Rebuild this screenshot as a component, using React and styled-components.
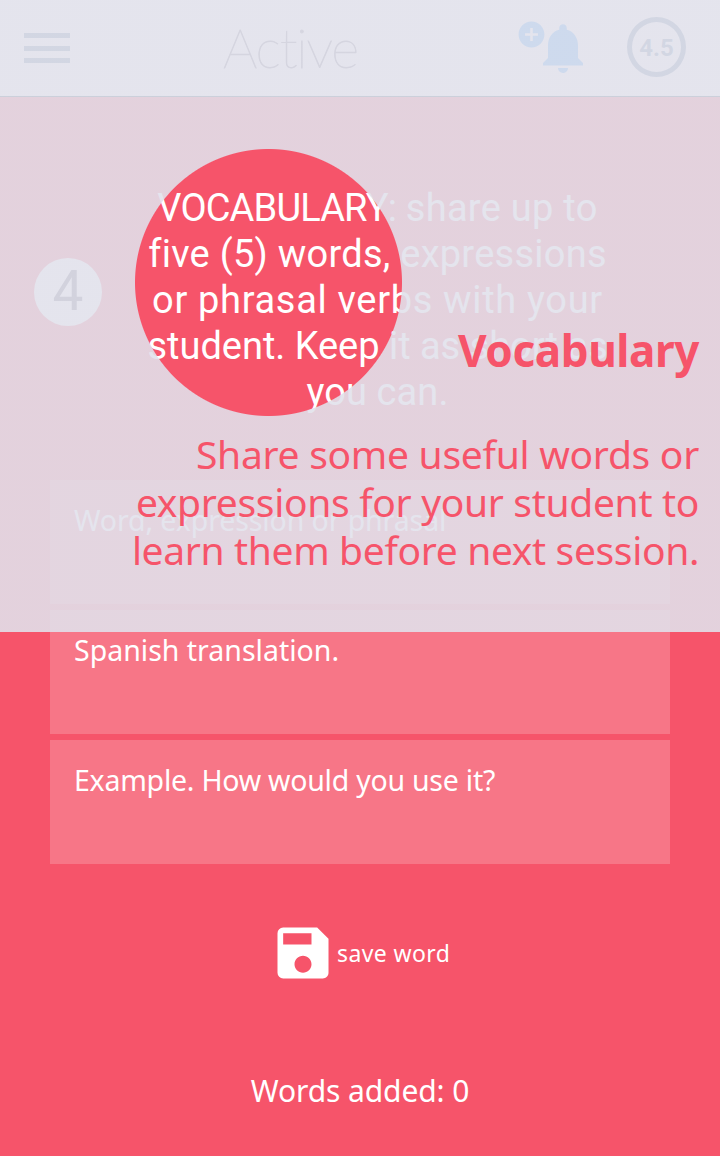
import React from 'react';
import styled, { createGlobalStyle } from 'styled-components';
import { MdSave, MdNotifications, MdAddCircle } from 'react-icons/md';

const RED = '#f6546a';

const Global = createGlobalStyle`
  * { box-sizing: border-box; }
  body { margin: 0; background: ${RED}; font-family: "Noto Sans", "Liberation Sans", sans-serif; }
`;

const Screen = styled.div`
  position: relative;
  width: 720px;
  height: 1156px;
  overflow: hidden;
  background: ${RED};
  color: #fff;
`;

const Header = styled.header`
  display: flex;
  align-items: center;
  height: 97px;
  padding: 0 34px 2px 24px;
  background: #fff;
  border-bottom: 1px solid #1c4658;
`;

const Menu = styled.div`
  display: flex;
  flex-direction: column;
  justify-content: space-between;
  width: 46px;
  height: 30px;
  margin-top: 2px;
`;

const MenuBar = styled.span`
  height: 5px;
  background: #5c7f9f;
`;

const Brand = styled.h1`
  flex: none;
  width: 136px;
  margin: 1px 0 0 153px;
  font: 100 54px/64px Lato, sans-serif;
  letter-spacing: -1.1px;
  color: #747484;
  -webkit-text-stroke: 0.8px #747484;
`;

const Notifications = styled.div`
  display: flex;
  align-items: flex-start;
  height: 60px;
  margin: 2px 0 0 auto;
  color: #32a0ff;
`;

const AddBadge = styled(MdAddCircle)`
  width: 31px;
  height: 31px;
  margin: 1px -14px 0 0;
`;

const Bell = styled(MdNotifications)`
  width: 60px;
  height: 60px;
`;

const Score = styled.div`
  display: flex;
  align-items: center;
  justify-content: center;
  width: 59px;
  height: 60px;
  margin: 0 0 1px 34px;
  border: 5px solid #5c7f9f;
  border-radius: 50%;
  font-family: Roboto, sans-serif;
  font-size: 24px;
  font-weight: 700;
  letter-spacing: 0;
  padding-top: 2px;
  color: #5c7f9f;
`;

const Step = styled.section`
  display: flex;
  align-items: center;
  height: 230px;
  margin: 88px 0 0 34px;
  font-family: Roboto, sans-serif;
`;

const StepNumber = styled.div`
  flex: none;
  width: 68px;
  height: 68px;
  margin-bottom: 16px;
  border-radius: 50%;
  background: #fff;
  color: #5a5a6e;
  font-size: 55px;
  line-height: 66px;
  text-align: center;
`;

const Instructions = styled.p`
  width: 470px;
  margin: 0 0 0 40.5px;
  font-size: 38px;
  line-height: 46px;
  text-align: center;
`;

const Line = styled.span`
  display: block;
  white-space: nowrap;
  letter-spacing: ${(p) => p.$spacing}px;
`;

const Lead = styled.span`
  letter-spacing: -0.85px;
`;

const Fields = styled.form`
  display: flex;
  flex-direction: column;
  gap: 6px;
  margin: 65px 50px 0;
`;

const Field = styled.div`
  height: 124px;
  padding: 22px 24px;
  background: rgba(255, 255, 255, 0.2);
  font-size: 28.5px;
  line-height: 36px;
  white-space: nowrap;
  letter-spacing: ${(p) => p.$spacing}px;
`;

const SaveButton = styled.button`
  display: flex;
  align-items: center;
  margin: 55px 0 0 269px;
  padding: 0;
  border: 0;
  background: none;
  color: #fff;
  font: 23px/28px "Noto Sans", sans-serif;
  letter-spacing: 0.4px;
`;

const SaveIcon = styled(MdSave)`
  width: 68px;
  height: 68px;
`;

const Count = styled.div`
  margin-top: 86px;
  font-size: 30px;
  line-height: 36px;
  letter-spacing: -0.1px;
  text-align: center;
`;

const Coach = styled.aside`
  position: absolute;
  inset: 0 0 auto 0;
  height: 632px;
  padding: 324px 21px 0;
  background: radial-gradient(
    circle at 268.5px 282.5px,
    transparent 133px,
    rgba(225, 225, 235, 0.89) 134px
  );
  color: ${RED};
  text-align: right;
`;

const CoachTitle = styled.h2`
  margin: 0;
  font-size: 44px;
  line-height: 52px;
  font-weight: 700;
  letter-spacing: -0.4px;
`;

const CoachText = styled.p`
  margin: 54px 0 0;
  font-size: 39px;
  line-height: 48px;
`;

const instructions = [
  ['five (5) words, expressions', 0.26],
  ['or phrasal verbs with your', 0.67],
  ['student. Keep it as short as', -0.03],
  ['you can.', 0.1],
];

const fields = [
  ['Word, expression or phrasal', -0.1],
  ['Spanish translation.', 0],
  ['Example. How would you use it?', -0.24],
];

const advice = [
  ['Share some useful words or', -0.28],
  ['expressions for your student to', -0.32],
  ['learn them before next session.', -0.35],
];

export default function App() {
  return (
    <>
      <Global />
      <Screen>
        <Header>
          <Menu><MenuBar /><MenuBar /><MenuBar /></Menu>
          <Brand>Active</Brand>
          <Notifications><AddBadge /><Bell /></Notifications>
          <Score>4.5</Score>
        </Header>
        <Step>
          <StepNumber>4</StepNumber>
          <Instructions>
            <Line $spacing={0.28}><Lead>VOCABULARY:</Lead> share up to</Line>
            {instructions.map(([t, s]) => <Line key={t} $spacing={s}>{t}</Line>)}
          </Instructions>
        </Step>
        <Fields>
          {fields.map(([t, s]) => <Field key={t} $spacing={s}>{t}</Field>)}
        </Fields>
        <SaveButton><SaveIcon />save word</SaveButton>
        <Count>Words added: 0</Count>
        <Coach>
          <CoachTitle>Vocabulary</CoachTitle>
          <CoachText>
            {advice.map(([t, s]) => <Line key={t} $spacing={s}>{t}</Line>)}
          </CoachText>
        </Coach>
      </Screen>
    </>
  );
}
